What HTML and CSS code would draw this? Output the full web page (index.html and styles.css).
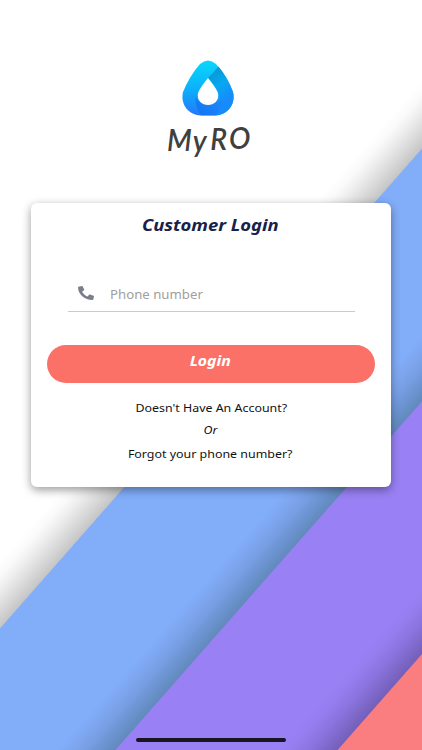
FILE: index.html
```html
<!DOCTYPE html>
<html lang="en">
<head>
<meta charset="utf-8">
<title>MyRO</title>
<link rel="stylesheet" href="styles.css">
</head>
<body>
<main class="screen">
  <svg class="logo" width="100" height="106" viewBox="160 56 100 106" role="img" aria-label="MyRO">
    <defs>
      <linearGradient id="drop" x1="0" y1="0" x2="0" y2="1">
        <stop offset="0" stop-color="#08d8fc"/>
        <stop offset=".5" stop-color="#0cb2fa"/>
        <stop offset="1" stop-color="#2378ff"/>
      </linearGradient>
      <linearGradient id="fold" gradientUnits="userSpaceOnUse" x1="212" y1="74" x2="228" y2="98">
        <stop offset="0" stop-color="#079ad8"/>
        <stop offset=".45" stop-color="#08a8f0"/>
        <stop offset="1" stop-color="#168cfb"/>
      </linearGradient>
      <linearGradient id="base" gradientUnits="userSpaceOnUse" x1="195" y1="0" x2="222" y2="0">
        <stop offset="0" stop-color="#0868e4"/>
        <stop offset="1" stop-color="#187ffa"/>
      </linearGradient>
    </defs>
    <path fill="url(#drop)" d="M200 64Q208 57 216 64C223 72 229 82 233 92C236 105 227 115 215 115.500H201C189 115 180 105 183 92C187 82 193 72 200 64Z"/>
    <path fill="url(#fold)" d="M218.500 66.500C225 74 230 83 233 92C236 105 227 115 215 115.500C220 111 222 104 220 97C218 90 213 83 208 78Z"/>
    <path fill="url(#base)" d="M195.500 96C195 107 199 112 201 115.500H215C220 111 222 104 221 98C217 106 198 106 195.500 96Z" opacity=".5"/>
    <path fill="#fff" d="M208 78C204 83 200 88 198 93C195 109 221 109 218 93C216 88 212 83 208 78Z"/>
    <text class="wordmark" transform="translate(167 151) scale(.92 1)" font-size="31"><tspan>M</tspan><tspan dx="1" dy="1">y</tspan><tspan dx="4" dy="-2">R</tspan><tspan dx="2" dy="-1">O</tspan></text>
  </svg>
  <section class="card">
    <h1 class="title">Customer Login</h1>
    <div class="field">
      <svg class="phone" width="16" height="14" viewBox="0 0 512 512" preserveAspectRatio="none">
        <path transform="rotate(0)" d="M18 24L122 1c12-3 24 4 29 15l48 112c4 10 1 22-7 29l-61 49c36 76 98 138 175 175l49-61c7-8 19-11 29-7l112 48c11 5 18 17 15 29l-23 104c-3 11-13 18-24 18C208 512 0 304 0 48c0-11 7-21 18-24z"/>
      </svg>
      <span class="placeholder">Phone number</span>
    </div>
    <button class="login"><span class="login-label">Login</span></button>
    <a class="link signup">Doesn't Have An Account?</a>
    <span class="or">Or</span>
    <a class="link forgot">Forgot your phone number?</a>
  </section>
  <div class="home-bar"></div>
</main>
</body>
</html>
```
FILE: styles.css
```css
* { box-sizing: border-box; }
body { margin: 0; font-family: "Noto Sans", sans-serif; }
.screen {
  height: 750px;
  display: flex;
  flex-direction: column;
  align-items: center;
  padding-top: 56px;
  background: linear-gradient(131.33deg,
    #fff 370px, #fafafa 380px, #ededed 390px, #dcdcdc 401px, #c6c6c6 414.500px,
    #82adf9 415.500px, #82adf9 538px, #7ea7f1 548px, #769ee2 560px, #6a92cd 572px, #628abd 581.500px,
    #9981f5 582.500px, #9981f5 704px, #957def 714px, #8b74df 727px, #7e69ca 739px, #745fbb 748.300px,
    #fa7d80 749.300px);
  overflow: hidden;
}
.logo { display: block; margin-left: -2px; }
.wordmark { font-family: Lato, sans-serif; font-style: italic; font-weight: 600; fill: #404040; }
.card {
  width: 360px;
  height: 284px;
  margin-top: 41px;
  border-radius: 6px;
  background: #fff;
  box-shadow: 0 3px 10px rgba(0, 0, 0, .4);
  display: flex;
  flex-direction: column;
  align-items: center;
}
.title {
  margin: 10px 0 0;
  padding-right: 2px;
  font-size: 16px;
  line-height: 24px;
  font-style: italic;
  font-weight: 700;
  color: #18204b;
  white-space: nowrap;
  transform: scaleX(1.15);
}
.field {
  width: 287px;
  height: 36px;
  margin-top: 39px;
  padding: 0 0 0 10px;
  border-bottom: 1px solid #cbcbcb;
  display: flex;
  align-items: center;
}
.phone { fill: #7b7f8d; margin-top: -1px; }
.placeholder { margin: 2px 0 0 16px; font-size: 12px; color: #a0a0a0; transform: scaleX(1.1); transform-origin: left; }
.login {
  width: 328px;
  height: 38px;
  margin-top: 33px;
  padding: 0 2px 7px 0;
  border: 0;
  border-radius: 19px;
  background: #fb7168;
  color: #fff;
  font: italic 700 14px "Noto Sans", sans-serif;
}
.login-label { display: inline-block; transform: scaleX(1.13); }
.link, .or { font-size: 11.500px; line-height: 20px; color: #111; white-space: nowrap; transform: scaleX(1.08); }
.signup { margin-top: 15px; }
.or { margin: 2px 2px 0 0; font-style: italic; }
.forgot { margin: 4px 1px 0 0; }
.home-bar { width: 150px; height: 4px; margin-top: 251px; border-radius: 2px; background: #17151f; }
```
